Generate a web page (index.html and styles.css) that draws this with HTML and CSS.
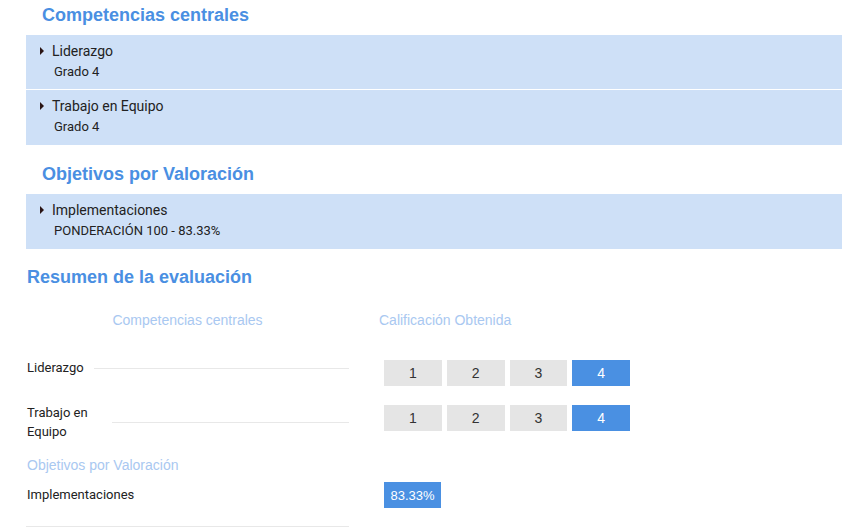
FILE: index.html
```html
<!DOCTYPE html>
<html lang="es">
<head>
<meta charset="utf-8">
<title>Resumen de la evaluación</title>
<link rel="stylesheet" href="styles.css">
</head>
<body>
<div class="page">
  <h2 class="section-title section-title--first">Competencias centrales</h2>
  <div class="panel">
    <div class="panel-item">
      <div class="item-title"><span class="caret"></span>Liderazgo</div>
      <div class="item-sub">Grado 4</div>
    </div>
    <div class="panel-item">
      <div class="item-title"><span class="caret"></span>Trabajo en Equipo</div>
      <div class="item-sub">Grado 4</div>
    </div>
  </div>

  <h2 class="section-title">Objetivos por Valoración</h2>
  <div class="panel">
    <div class="panel-item">
      <div class="item-title"><span class="caret"></span>Implementaciones</div>
      <div class="item-sub">PONDERACIÓN 100 - 83.33%</div>
    </div>
  </div>

  <h2 class="summary-title">Resumen de la evaluación</h2>
  <div class="summary">
    <div class="summary-row summary-head">
      <div class="col-left head-left">Competencias centrales</div>
      <div class="col-right head-right">Calificación Obtenida</div>
    </div>

    <div class="summary-row row-comp">
      <div class="col-left label-line">
        <span class="label">Liderazgo</span>
        <span class="rule"></span>
      </div>
      <div class="col-right scale">
        <span class="score">1</span><span class="score">2</span><span class="score">3</span><span class="score score--active">4</span>
      </div>
    </div>

    <div class="summary-row row-comp row-comp--second">
      <div class="col-left label-line">
        <span class="label label--wrap">Trabajo en Equipo</span>
        <span class="rule"></span>
      </div>
      <div class="col-right scale">
        <span class="score">1</span><span class="score">2</span><span class="score">3</span><span class="score score--active">4</span>
      </div>
    </div>

    <div class="summary-sub">Objetivos por Valoración</div>

    <div class="summary-row row-obj">
      <div class="col-left obj-left">Implementaciones</div>
      <div class="col-right scale">
        <span class="badge">83.33%</span>
      </div>
    </div>
  </div>
</div>
</body>
</html>
```

FILE: styles.css
```css
* { box-sizing: border-box; }

body {
  margin: 0;
  background: #ffffff;
  color: #222;
  font-family: Roboto, "Liberation Sans", Arial, sans-serif;
}

.page {
  padding: 0 22px 0 26px;
}

.section-title {
  margin: 18px 0 9px;
  padding-left: 16px;
  font-family: "Liberation Sans", Arial, sans-serif;
  font-weight: 700;
  font-size: 18px;
  line-height: 22px;
  color: #4a8fe2;
}

.section-title--first {
  margin-top: 4px;
}

.panel {
  background: #cee0f7;
  padding-bottom: 1px;
}

.panel-item {
  padding: 6px 14px 9px;
}

.panel-item + .panel-item {
  border-top: 1px solid #ffffff;
}

.item-title {
  display: flex;
  align-items: center;
  font-size: 14px;
  line-height: 20px;
  color: #222;
}

.caret {
  width: 0;
  height: 0;
  border-top: 4px solid transparent;
  border-bottom: 4px solid transparent;
  border-left: 4px solid #2a1414;
  margin-right: 8px;
}

.item-sub {
  margin-top: 3px;
  padding-left: 14px;
  font-size: 13px;
  line-height: 16px;
  color: #222;
}

.summary-title {
  margin: 17px 0 0;
  padding-left: 1px;
  font-family: "Liberation Sans", Arial, sans-serif;
  font-weight: 700;
  font-size: 18px;
  line-height: 22px;
  color: #4a8fe2;
}

.summary {
  display: flex;
  flex-direction: column;
}

.summary-row {
  display: grid;
  grid-template-columns: 323px 1fr;
  column-gap: 30px;
  align-items: start;
}

.summary-head {
  margin-top: 22px;
  font-family: "Liberation Sans", Arial, sans-serif;
  font-size: 14px;
  line-height: 20px;
  color: #a9c8f1;
}

.head-left { text-align: center; }

.row-comp { margin-top: 28px; }
.row-comp--second { margin-top: 17px; }

.label-line {
  display: flex;
  align-items: center;
  padding-left: 1px;
}

.label {
  font-size: 13px;
  line-height: 20px;
  color: #222;
  flex: none;
}

.label--wrap {
  width: 75px;
  line-height: 19px;
}

.rule {
  flex: 1;
  border-top: 1px solid #e8e8e8;
  margin-left: 10px;
}

.scale {
  display: flex;
  gap: 5px;
  padding-left: 5px;
  margin-top: 2px;
}

.score {
  width: 57.75px;
  height: 26px;
  display: flex;
  align-items: center;
  justify-content: center;
  background: #e5e5e5;
  color: #333;
  font-family: "Liberation Sans", Arial, sans-serif;
  font-size: 14px;
}

.score--active {
  background: #4a90e2;
  color: #ffffff;
}

.summary-sub {
  margin-top: 14px;
  padding-left: 1px;
  font-family: "Liberation Sans", Arial, sans-serif;
  font-size: 14px;
  line-height: 20px;
  color: #a9c8f1;
}

.row-obj { margin-top: 7px; }

.obj-left {
  font-size: 13px;
  line-height: 26px;
  padding-left: 1px;
  padding-bottom: 18px;
  border-bottom: 1px solid #e8e8e8;
}

.row-obj .scale { margin-top: 0; }

.badge {
  height: 26px;
  padding: 0 6.5px;
  display: flex;
  align-items: center;
  background: #4a90e2;
  color: #ffffff;
  font-family: "Liberation Sans", Arial, sans-serif;
  font-size: 13px;
}
```
